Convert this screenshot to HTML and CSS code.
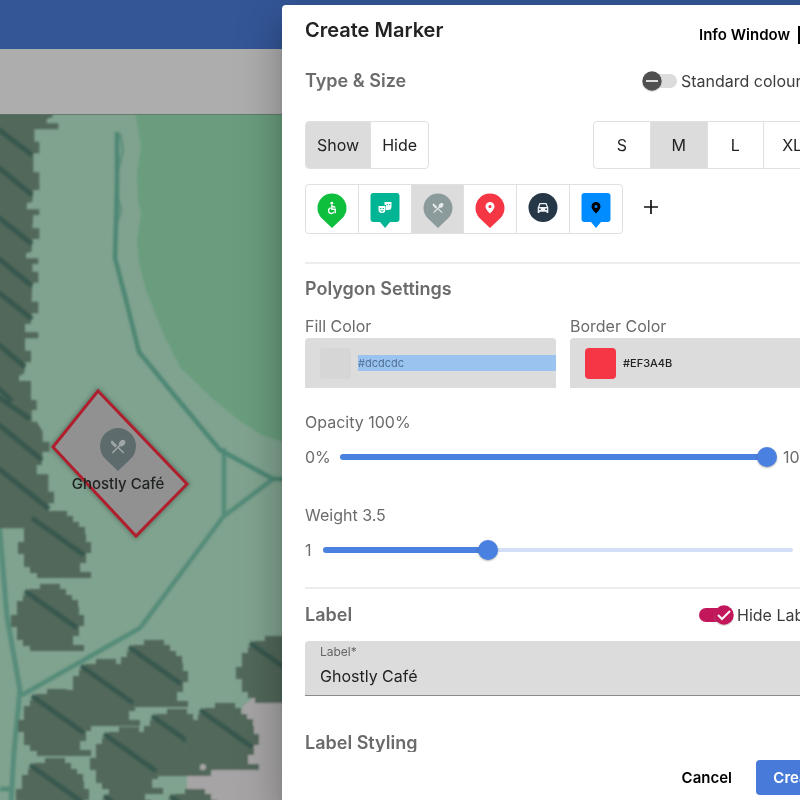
FILE: index.html
```html
<!DOCTYPE html>
<html lang="en">
<head>
<meta charset="utf-8">
<meta name="viewport" content="width=device-width, initial-scale=1">
<title>Create Marker</title>
<link rel="stylesheet" href="styles.css">
</head>
<body>
<div class="page">
  <div class="backdrop-app">
    <header class="app-bar"></header>
    <div class="app-toolbar"></div>
    <svg class="map" viewBox="0 114 800 686" preserveAspectRatio="xMinYMin slice" role="img" aria-label="Map">
      <defs>
        <filter id="soft" x="0" y="0" width="100%" height="100%"><feGaussianBlur stdDeviation="0.8"/></filter>
        <filter id="halo" x="-20%" y="-20%" width="140%" height="140%"><feGaussianBlur stdDeviation="2"/></filter>
        <g id="tree">
          <path fill="#51675a" d="M29 0H49V5H55V11H61V16H67V23H68V31H73V42H68V52H62V61H73V67H19V62H12V56H6V43H0V31H6V17H12V11H18V5H29Z"/>
          <path stroke="#38594f" stroke-width="5" d="M14 7L66 44"/>
        </g>
      </defs>
      <rect x="0" y="114" width="800" height="686" fill="#80a38f"/>
      <g filter="url(#soft)">
        <path fill="#699d7e" d="M135 110L141 147L137 173L138 200L141 213L137 240L139 262L146 290L163 333L180 367L213 399L240 421L262 435L290 444H800V110Z"/>
        <path fill="#a6a4a5" d="M243 706L254 697H800V810H187V776L212 771L238 740Z"/>
        <g fill="none" stroke="#4d8775" stroke-width="4.500" stroke-linejoin="round">
          <path d="M117 132L117 187L115 258L126 300L139 352L180 402L220 450L273 479H300"/>
          <path d="M120 134L123 150L118 170M117 195L121 210L117 222" stroke-width="3" opacity=".6"/>
          <path d="M224 448V517M273 479L223 517L140 628L22 695" opacity=".85"/>
          <path d="M-2 510L7 617L20 690L14 752L11 802M0 789H14" stroke-width="5" opacity=".8"/>
        </g>
        <path fill="#51675a" transform="scale(.33333)" d="M-9 336H158V350L140 358V370H175V388H103V425H118V460H100V517H118V570H100L97 605L80 610V628H118V645H100L97 685H118V717H97L95 755L78 760V775H115V792H97V815H115V848H97L95 905H115V940H95L92 972H75V997H115V1015H75V1052H93V1087H75L73 1120L57 1128V1143H93V1200H110V1230H95V1265H110L128 1295V1325H148V1355H128L125 1395H110V1423H145V1475H162V1510H145V1585H-9Z"/>
        <path stroke="#38594f" stroke-width="5" d="M-2 129L32 155M-2 167L32 195M-2 217L32 244M-2 258L32 286M-2 292L32 319M-2 344L25 367M-2 388L12 401M-2 397L30 419M-2 424L42 460M-2 468L49 509"/>
        <use href="#tree" x="18" y="511"/>
        <use href="#tree" x="11" y="584"/>
        <use href="#tree" x="115" y="640"/>
        <use href="#tree" x="67" y="659"/>
        <use href="#tree" x="18" y="689"/>
        <use href="#tree" x="138" y="709"/>
        <use href="#tree" x="186" y="703"/>
        <use href="#tree" x="90" y="727"/>
        <use href="#tree" x="16" y="758"/>
        <use href="#tree" x="236" y="636"/>
        <use href="#tree" x="90" y="789"/>
        <use href="#tree" x="156" y="789"/>
        <circle cx="203" cy="767" r="3" fill="#a6a4a5"/>
      </g>
      <path d="M0 114.500H800" stroke="#5d7468" opacity=".8"/>
      <path d="M53 447L98 391L187 484L136 536Z" fill="none" stroke="#33463c" stroke-width="5" opacity=".5" filter="url(#halo)"/>
      <path d="M53 447L98 391L187 484L136 536Z" fill="#919191" stroke="#b01f2e" stroke-width="3"/>
      <path fill="#5e6b6d" d="M118 471L105 458.500A18 18 0 1 1 131 458.500Z"/>
      <svg x="109" y="437.500" width="18" height="18" viewBox="0 0 24 24"><path fill="#a0a6a7" d="M8.100 13.340l2.830-2.830L3.910 3.500a4.008 4.008 0 0 0 0 5.660l4.190 4.180zm6.780-1.810c1.530.71 3.680.21 5.270-1.380 1.910-1.910 2.280-4.650.81-6.120-1.460-1.460-4.200-1.100-6.120.81-1.590 1.590-2.090 3.740-1.380 5.270L3.700 19.870l1.410 1.410L12 14.410l6.880 6.880 1.410-1.410L13.410 13l1.470-1.470z"/></svg>
      <text class="map-label" x="118" y="489" text-anchor="middle">Ghostly Café</text>
    </svg>
  </div>

  <form class="dialog" role="dialog" aria-labelledby="dialog-title">
    <header class="dialog-head">
      <h1 id="dialog-title">Create Marker</h1>
      <button type="button" class="text-button info-button"><span>Info Window</span>
        <svg width="18" height="18" viewBox="0 0 18 18" aria-hidden="true"><path fill="none" stroke="#000" stroke-width="2" d="M8 1H1V17H17V10M11 1H17V7M17 1L8 10"/></svg>
      </button>
    </header>

    <div class="dialog-body">
      <div class="row type-row">
        <h2>Type &amp; Size</h2>
        <label class="switch standard"><input type="checkbox" role="switch">
          <svg width="36" height="24" viewBox="0 0 36 24" aria-hidden="true"><rect x="3" y="5" width="32" height="14" rx="7" fill="#dcdcdc"/><circle cx="10" cy="13" r="10" fill="#bbb" opacity=".5"/><circle cx="10" cy="12" r="9.700" fill="#505050"/><path d="M4 12H16" stroke="#ddd" stroke-width="2"/></svg>
          <span>Standard colours</span></label>
      </div>

      <div class="row toggles">
        <div class="segmented visibility" role="group" aria-label="Visibility">
          <button type="button" class="selected" aria-pressed="true">Show</button><button type="button" aria-pressed="false">Hide</button>
        </div>
        <div class="segmented sizes" role="group" aria-label="Size">
          <button type="button">S</button><button type="button" class="selected" aria-pressed="true">M</button><button type="button">L</button><button type="button">XL</button>
        </div>
      </div>

      <div class="icon-row">
        <div class="segmented icons" role="group" aria-label="Marker icon">
          <button type="button" aria-label="Accessible"><svg width="30" height="36" viewBox="0 0 30 36"><path fill="#0dbf3c" d="M15 35L4.500 25A14.500 14.500 0 1 1 25.500 25Z"/><g fill="none" stroke="#fff" stroke-width="1.400"><circle cx="14.800" cy="10.200" r="1.400" fill="#fff" stroke="none"/><path d="M14.800 12V16.300H18.200V20.200M15 13.300L18.300 14.200M13.600 15A2.800 2.800 0 1 0 16.800 19"/></g></svg></button>
          <button type="button" aria-label="Theatre"><svg width="30" height="36" viewBox="0 0 30 36"><path fill="#00b594" d="M3.500 0H26.500Q29.500 0 29.500 3V26Q29.500 29 26.500 29H20L15 35L10 29H3.500Q.5 29 .5 26V3Q.5 0 3.500 0Z"/><path fill="#fff" d="M14.500 9H21.500V13.500Q21.500 17 18 17H16V12H14.500ZM8.500 13H15.500V16.500Q15.500 20 12 20T8.500 16.500Z"/><path stroke="#00b594" d="M16.700 11.700H18M19 11.700H20.300M10 15.500H11.300M12.700 15.500H14M10.500 17.500Q12 19 13.500 17.500" fill="none"/></svg></button>
          <button type="button" class="selected" aria-pressed="true" aria-label="Restaurant"><svg width="30" height="36" viewBox="0 0 30 36"><path fill="#8b9b9c" d="M15 35L4.500 25A14.500 14.500 0 1 1 25.500 25Z"/><path fill="#e6eaea" transform="translate(8.200 8.200) scale(.56)" d="M8.100 13.340l2.830-2.830L3.910 3.500a4.008 4.008 0 0 0 0 5.660l4.190 4.180zm6.780-1.810c1.530.71 3.680.21 5.270-1.380 1.910-1.910 2.280-4.650.81-6.120-1.460-1.460-4.200-1.100-6.120.81-1.590 1.590-2.090 3.740-1.380 5.270L3.700 19.870l1.410 1.410L12 14.410l6.880 6.880 1.410-1.410L13.410 13l1.470-1.470z"/></svg></button>
          <button type="button" aria-label="Place"><svg width="30" height="36" viewBox="0 0 30 36"><path fill="#f53644" d="M15 35L4.500 25A14.500 14.500 0 1 1 25.500 25Z"/><path fill="#fff" fill-rule="evenodd" d="M15 9A4.500 4.500 0 0 0 10.500 13.500C10.500 16.500 15 20.500 15 20.500S19.500 16.500 19.500 13.500A4.500 4.500 0 0 0 15 9ZM15 12A1.600 1.600 0 1 1 15 15.200A1.600 1.600 0 0 1 15 12Z"/></svg></button>
          <button type="button" aria-label="Car"><svg width="30" height="36" viewBox="0 0 30 36"><circle cx="15" cy="14.500" r="14.500" fill="#263747"/><path fill="#eef1f3" fill-rule="evenodd" d="M11.500 10H18.500L20.300 14.500V20H18.500V18.700H11.500V20H9.700V14.500ZM12.300 11.200L11.300 14H18.700L17.700 11.200ZM11 15.500V17H12.700V15.500ZM17.300 15.500V17H19V15.500Z"/></svg></button>
          <button type="button" aria-label="Place, square"><svg width="30" height="36" viewBox="0 0 30 36"><path fill="#008cff" d="M3.500 0H26.500Q29.500 0 29.500 3V26Q29.500 29 26.500 29H20L15 35L10 29H3.500Q.5 29 .5 26V3Q.5 0 3.500 0Z"/><path fill="#000" fill-rule="evenodd" d="M15 9A4.500 4.500 0 0 0 10.500 13.500C10.500 16.500 15 20.500 15 20.500S19.500 16.500 19.500 13.500A4.500 4.500 0 0 0 15 9ZM15 12A1.500 1.500 0 1 1 15 15A1.500 1.500 0 0 1 15 12Z"/></svg></button>
        </div>
        <button type="button" class="add-button" aria-label="Add icon"><svg width="14" height="14" viewBox="0 0 14 14"><path d="M7 0V14M0 7H14" stroke="#111" stroke-width="1.700"/></svg></button>
      </div>

      <hr>

      <h2 class="polygon-title">Polygon Settings</h2>
      <div class="colors">
        <div class="color-field">
          <label for="fill">Fill Color</label>
          <div class="color-box"><span class="swatch swatch-fill"></span><input id="fill" class="active" type="text" value="#dcdcdc"></div>
        </div>
        <div class="color-field">
          <label for="border">Border Color</label>
          <div class="color-box"><span class="swatch swatch-border"></span><input id="border" type="text" value="#EF3A4B"></div>
        </div>
      </div>

      <label class="slider-title first" for="opacity">Opacity 100%</label>
      <div class="slider-row opacity-row">
        <span>0%</span>
        <span class="slider"><span class="rail"></span><span class="fill" style="width:100%"></span><input id="opacity" type="range" min="0" max="100" value="100"></span>
        <span>100%</span>
      </div>

      <label class="slider-title second" for="weight">Weight 3.5</label>
      <div class="slider-row weight-row">
        <span>1</span>
        <span class="slider"><span class="rail"></span><span class="fill" style="width:35%"></span><input id="weight" type="range" min="1" max="8" step="any" value="3.46"></span>
        <span>8</span>
      </div>

      <hr class="second-rule">

      <div class="row label-row">
        <h2>Label</h2>
        <label class="switch hide-label"><input type="checkbox" role="switch" checked>
          <svg width="36" height="24" viewBox="0 0 36 24" aria-hidden="true"><rect x="1" y="5" width="32" height="14" rx="7" fill="#c2185b"/><circle cx="26" cy="13" r="10" fill="#999" opacity=".4"/><circle cx="26" cy="12" r="9.700" fill="#c2185b"/><path d="M20 12L24 16L32 8" fill="none" stroke="#fff" stroke-width="2"/></svg>
          <span>Hide Label</span></label>
      </div>

      <div class="text-field">
        <label for="label">Label*</label>
        <input id="label" type="text" value="Ghostly Café">
      </div>

      <h2 class="styling-title">Label Styling</h2>
    </div>

    <footer class="dialog-foot">
      <button type="button" class="text-button">Cancel</button>
      <button type="submit" class="primary">Create</button>
    </footer>
  </form>
</div>
</body>
</html>
```
FILE: styles.css
```css
* { box-sizing: border-box; }

body {
  margin: 0;
  overflow: hidden;
  font-family: Inter, "Open Sans", sans-serif;
  font-size: 16px;
  line-height: 24px;
  color: #222;
}

button, input { font: inherit; color: inherit; }
button { border: 0; background: none; padding: 0; }
h1, h2 { margin: 0; }
svg { display: block; }

.page {
  display: grid;
  grid-template-columns: 282px calc(100% - 238px);
  height: 100vh;
  overflow: hidden;
}

/* Dimmed application behind the dialog */
.backdrop-app {
  grid-area: 1 / 1 / 2 / 3;
  display: grid;
  grid-template-rows: 49px 65px minmax(0, 1fr);
  width: 100vw;
  min-height: 0;
}
.app-bar { background: #335697; }
.app-toolbar { background: #adadad; }
.map { width: 100%; height: 100%; }
.map-label { font-size: 15px; font-weight: 500; fill: #1e2120; }

/* Dialog */
.dialog {
  grid-area: 1 / 2;
  display: grid;
  grid-template-rows: auto minmax(0, 1fr) auto;
  min-height: 0;
  margin-top: 5px;
  background: #fff;
  border-radius: 4px 4px 0 0;
  box-shadow: 0 11px 15px -7px rgba(0, 0, 0, .2), 0 24px 38px 3px rgba(0, 0, 0, .14), 0 9px 46px 8px rgba(0, 0, 0, .12);
}
.dialog-head {
  display: flex;
  justify-content: space-between;
  padding: 9px 28px 0 23px;
}
h1 { font-size: 20px; font-weight: 600; line-height: 32px; }
h2 { font-size: 18px; font-weight: 600; line-height: 24px; color: #6b6b6b; }
.text-button { font-size: 15px; font-weight: 600; color: #000; }
.info-button { display: flex; align-items: center; gap: 8px; height: 42px; }

.dialog-body { overflow: hidden; padding: 0 23px; }
.row { display: flex; align-items: center; justify-content: space-between; }
.type-row { height: 50px; }

.switch { display: flex; align-items: center; gap: 3px; color: #3c3c3c; }
.switch input { appearance: none; width: 0; height: 0; margin: 0; }
.standard span { min-width: 140px; }
.hide-label span { min-width: 84px; }

.toggles { margin-top: 15px; }
.segmented {
  display: flex;
  border: 1px solid #e0e0e0;
  border-radius: 4px;
  overflow: hidden;
}
.segmented button + button { border-left: 1px solid #e0e0e0; }
.segmented .selected { background: #dcdcdc; }
.visibility button { height: 46px; padding: 0 11px; }
.sizes { width: 228px; }
.sizes button { flex: 1; height: 46px; }
.icon-row { display: flex; align-items: center; gap: 21px; margin-top: 15px; }
.icons { width: 318px; }
.icons button { display: grid; flex: 1; place-items: center; height: 48px; padding-top: 4px; }
.add-button { padding: 0 0 4px; }

hr { height: 2px; margin: 28px 0 0; border: 0; background: #ededed; }
.polygon-title { margin-top: 13px; }

.colors {
  display: grid;
  grid-template-columns: 1fr 1fr;
  gap: 14px;
  margin-top: 13px;
  color: #6b6b6b;
}
.color-field label { display: block; }
.color-box {
  display: flex;
  align-items: center;
  gap: 7px;
  height: 50px;
  padding-left: 15px;
  background: #dcdcdc;
  border-radius: 4px 4px 0 0;
}
.swatch { flex: none; width: 31px; height: 31px; border-radius: 4px; }
.swatch-fill { background: #d6d6d6; }
.swatch-border { background: #f53644; }
.color-box input {
  flex: 1;
  min-width: 0;
  height: 16px;
  padding: 0;
  border: 0;
  background: none;
  font-size: 11px;
  font-weight: 500;
  color: #222;
}
.color-box .active { background: #9ac4ef; color: #4f7197; font-weight: 400; }

.slider-title { display: block; color: #6b6b6b; }
.slider-title.first { margin-top: 22px; }
.slider-title.second { margin-top: 34px; }
.slider-row { display: grid; gap: 16px; margin-top: 11px; color: #6b6b6b; }
.opacity-row { grid-template-columns: 19px 1fr 38px; }
.weight-row { grid-template-columns: 2px 1fr 12px; }
.opacity-row span, .weight-row span { white-space: nowrap; }
.slider { display: grid; align-items: center; }
.rail, .fill, .slider input { grid-area: 1 / 1; }
.rail { height: 4px; border-radius: 2px; background: #d3dff6; }
.fill { height: 6px; border-radius: 3px; background: #4a80e0; }
.slider input { appearance: none; width: calc(100% + 20px); height: 20px; margin: 0 -10px; background: none; }
.slider input::-webkit-slider-thumb {
  appearance: none;
  width: 20px;
  height: 20px;
  border-radius: 50%;
  background: #4a80e0;
  box-shadow: 0 1px 2px rgba(0, 0, 0, .3);
}

.second-rule { margin-top: 25px; }
.label-row { margin-top: 14px; }
.text-field {
  height: 55px;
  margin-top: 14px;
  padding: 2px 15px 0;
  background: #dcdcdc;
  border-bottom: 1px solid #8a8a8a;
  border-radius: 4px 4px 0 0;
}
.text-field label { display: block; font-size: 12px; line-height: 18px; color: #666; }
.text-field input { display: block; width: 100%; height: 30px; padding: 0; border: 0; background: none; }
.styling-title { margin-top: 35px; }

.dialog-foot {
  display: flex;
  justify-content: flex-end;
  align-items: center;
  gap: 24px;
  padding: 8px 5px 5px;
}
.primary {
  width: 83px;
  height: 35px;
  border-radius: 4px;
  background: #487bd9;
  color: #fff;
  font-size: 15px;
  font-weight: 600;
}
```
